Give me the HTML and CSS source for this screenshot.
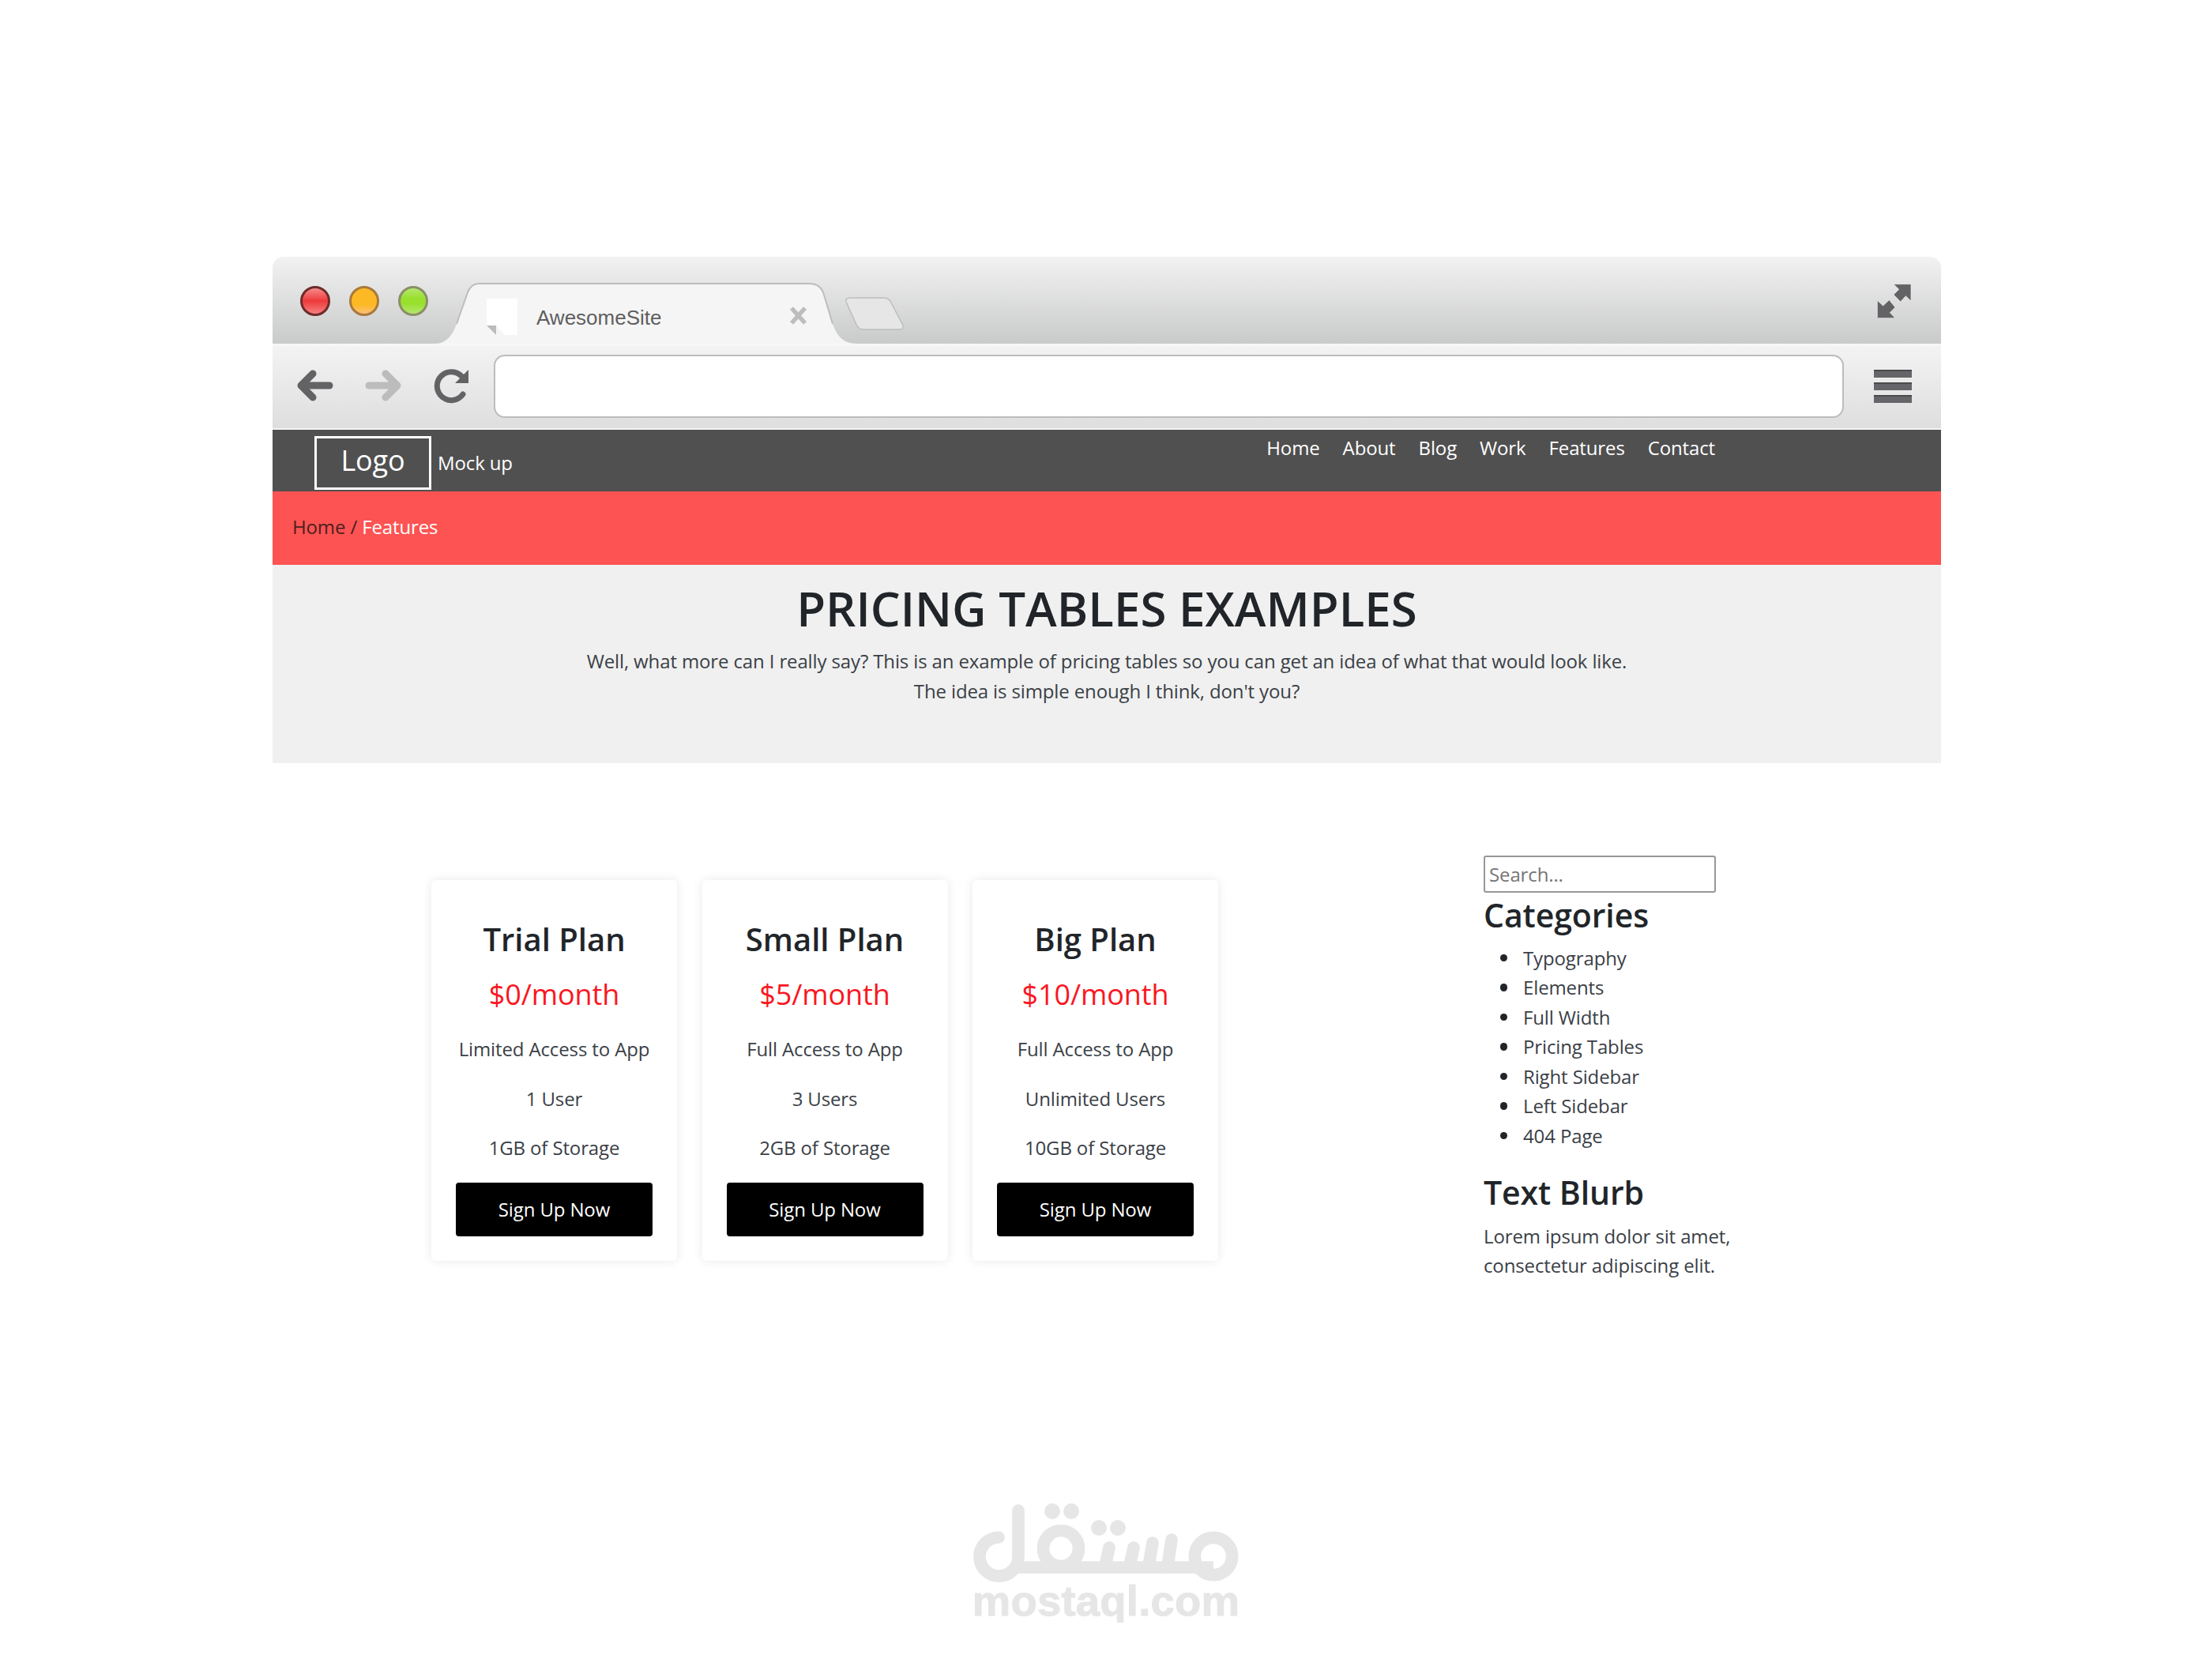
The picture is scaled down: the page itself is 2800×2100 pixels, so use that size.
FILE: index.html
```html
<!DOCTYPE html>
<html lang="en">

<head>
  <meta charset="utf-8">
  <title>AwesomeSite - Pricing Tables</title>
  <link rel="stylesheet" href="styles.css">
</head>

<body>
  <div class="frame">
    <div class="tab-strip">
      <div class="lights">
        <span class="light light-red"></span>
        <span class="light light-amber"></span>
        <span class="light light-green"></span>
      </div>
      <div class="tab">
        <svg class="tab-shape" viewBox="0 0 534 77">
          <path fill="#f5f5f5" d="M0 77C14 77 22 66 27 52L41 12C44 5 48 1 55 0H474C482 1 488 5 491 12L503 52C508 66 515 77 534 77Z"/>
          <path fill="none" stroke="#bdbdbd" stroke-width="2" d="M27 52L41 12C44 5 48 1 55 1H474C482 1 488 5 491 12L503 52"/>
        </svg>
        <svg class="favicon" viewBox="0 0 39 46">
          <polygon fill="#fff" points="0,34 0,0 39,0 39,46 23,46 12,34"/>
          <polygon fill="#bcbcbc" points="0,34 12,34 12,46"/>
        </svg>
        <span class="tab-title">AwesomeSite</span>
        <svg class="tab-close" viewBox="0 0 23 23">
          <path stroke="#bdbdbd" stroke-width="5.5" d="M3 2L20 21M20 2L3 21"/>
        </svg>
      </div>
      <svg class="new-tab" viewBox="0 0 76 42">
        <path fill="#e6e6e6" stroke="#bdbdbd" stroke-width="1.5" d="M7 1H50C54 1 57 3 59 7L74 36C75 39 73 41 70 41H24C20 41 17 39 15 35L2 6C1 3 3 1 7 1Z"/>
      </svg>
      <svg class="expand" viewBox="160 80 150 150">
        <polygon fill="#636265" stroke="#f2f2f2" stroke-width="2" points="232,88 298,88 298,152 278,133 258,155 232,128 252,108"/>
        <polygon fill="#636265" stroke="#f2f2f2" stroke-width="2" points="170,150 192,170 215,148 238,176 218,196 238,217 170,217"/>
      </svg>
    </div>

    <div class="toolbar">
      <svg class="tool-arrow" viewBox="0 0 48 48">
        <path fill="none" stroke="#636265" stroke-width="9" stroke-linecap="round" stroke-linejoin="round" d="M21 8L6 23L21 38"/>
        <path fill="none" stroke="#636265" stroke-width="9" stroke-linecap="round" d="M8 23H42"/>
      </svg>
      <svg class="tool-arrow tool-forward" viewBox="0 0 48 48">
        <path fill="none" stroke="#bcbcbc" stroke-width="9" stroke-linecap="round" stroke-linejoin="round" d="M27 8L42 23L27 38"/>
        <path fill="none" stroke="#bcbcbc" stroke-width="9" stroke-linecap="round" d="M40 23H6"/>
      </svg>
      <svg class="tool-reload" viewBox="0 0 52 48">
        <path fill="none" stroke="#636265" stroke-width="7" stroke-linecap="round" d="M41 34A18 18 0 1 1 40 12"/>
        <polygon fill="#636265" points="48,3 48,20 31,20"/>
      </svg>
      <div class="address"></div>
      <div class="menu-btn">
        <span></span>
        <span></span>
        <span></span>
      </div>
    </div>

    <nav class="site-nav">
      <a class="logo" href="#">Logo</a>
      <span class="mock">Mock up</span>
      <ul class="nav-links">
        <li><a href="#">Home</a></li>
        <li><a href="#">About</a></li>
        <li><a href="#">Blog</a></li>
        <li><a href="#">Work</a></li>
        <li><a href="#">Features</a></li>
        <li><a href="#">Contact</a></li>
      </ul>
    </nav>

    <div class="crumbs"><a href="#">Home</a> / <span class="crumb-current">Features</span></div>

    <header class="hero">
      <h1>PRICING TABLES EXAMPLES</h1>
      <p>Well, what more can I really say? This is an example of pricing tables so you can get an idea of what that would look like.<br>The idea is simple enough I think, don't you?</p>
    </header>

    <div class="content">
      <section class="plans">
        <div class="plan">
          <h3>Trial Plan</h3>
          <div class="price">$0/month</div>
          <ul>
            <li>Limited Access to App</li>
            <li>1 User</li>
            <li>1GB of Storage</li>
          </ul>
          <a class="signup" href="#">Sign Up Now</a>
        </div>
        <div class="plan">
          <h3>Small Plan</h3>
          <div class="price">$5/month</div>
          <ul>
            <li>Full Access to App</li>
            <li>3 Users</li>
            <li>2GB of Storage</li>
          </ul>
          <a class="signup" href="#">Sign Up Now</a>
        </div>
        <div class="plan">
          <h3>Big Plan</h3>
          <div class="price">$10/month</div>
          <ul>
            <li>Full Access to App</li>
            <li>Unlimited Users</li>
            <li>10GB of Storage</li>
          </ul>
          <a class="signup" href="#">Sign Up Now</a>
        </div>
      </section>

      <aside class="sidebar">
        <input class="search" type="text" placeholder="Search...">
        <h3>Categories</h3>
        <ul>
          <li>Typography</li>
          <li>Elements</li>
          <li>Full Width</li>
          <li>Pricing Tables</li>
          <li>Right Sidebar</li>
          <li>Left Sidebar</li>
          <li>404 Page</li>
        </ul>
        <h3 class="blurb-title">Text Blurb</h3>
        <p>Lorem ipsum dolor sit amet,<br>consectetur adipiscing elit.</p>
      </aside>
    </div>
  </div>

  <div class="watermark">
    <svg class="watermark-logo" viewBox="0 0 440 144">
      <g fill="none" stroke="#e6e6e6" stroke-width="15.7" stroke-linecap="round">
        <path d="M84 86A24.5 24.5 0 1 0 109 110V52"/>
        <circle cx="163" cy="100" r="22.5"/>
        <circle cx="356" cy="110" r="23.7"/>
        <path stroke-linecap="butt" d="M109 124H356"/>
        <path d="M224 99L219 122"/>
        <path d="M255 99L250 122"/>
        <path d="M279 93L274 122"/>
        <path d="M303 89L298 122"/>
      </g>
      <g fill="#e6e6e6">
        <circle cx="152" cy="53" r="10"/>
        <circle cx="176" cy="53" r="10"/>
        <circle cx="211" cy="74" r="10"/>
        <circle cx="235" cy="74" r="10"/>
      </g>
    </svg>
    <div class="watermark-text">mostaql.com</div>
  </div>
</body>

</html>
```

FILE: styles.css
```css
body {
  margin: 0;
  background-color: #fff;
  color: #3a4046;
  font-family: "Open Sans", "Noto Sans", sans-serif;
  font-size: 24px;
  line-height: 37.5px;
  letter-spacing: -0.13px;
}
a {
  color: inherit;
  text-decoration: none;
}
ul {
  margin: 0;
  padding: 0;
}
.frame {
  width: 2112px;
  margin: 325px 0 0 345px;
}

/* browser chrome */
.tab-strip {
  display: flex;
  height: 110px;
  border-radius: 14px 14px 0 0;
  background: linear-gradient(#f2f2f2, #c9caca);
}
.lights {
  display: flex;
  gap: 24px;
  margin: 37px 0 0 35px;
}
.light {
  box-sizing: border-box;
  width: 38px;
  height: 38px;
  border-radius: 50%;
  border: 3px solid;
}
.light-red {
  border-color: #6f2b2b;
  background: linear-gradient(#f68a8a, #ee3a3a 50%, #f77f7f);
}
.light-amber {
  border-color: #a9793c;
  background: linear-gradient(#fdb924 65%, #fcc07a);
}
.light-green {
  border-color: #8b8f68;
  background: linear-gradient(#b4e76f, #98e02d 40%, #98e02d 60%, #b4e76f);
}
.tab {
  position: relative;
  display: flex;
  align-items: center;
  box-sizing: border-box;
  width: 534px;
  height: 77px;
  margin: 33px 0 0 9px;
  padding: 9px 63px 0 65px;
  color: #5f5f5f;
  font-family: "Liberation Sans", sans-serif;
  font-size: 26px;
  letter-spacing: 0;
}
.tab-shape {
  position: absolute;
  top: 0;
  left: 0;
  width: 534px;
  height: 77px;
}
.favicon {
  position: relative;
  width: 39px;
  height: 46px;
}
.tab-title {
  position: relative;
  margin: 3px 0 0 24px;
}
.tab-close {
  position: relative;
  width: 23px;
  height: 23px;
  margin: -4px 0 0 auto;
}
.new-tab {
  width: 78px;
  height: 42px;
  margin: 51px 0 0 -17px;
}
.expand {
  width: 50px;
  height: 50px;
  margin: 32px 34px 0 auto;
}
.toolbar {
  display: flex;
  align-items: center;
  box-sizing: border-box;
  height: 109px;
  padding: 0 37px 2px 30px;
  border-top: 3px solid #f7f7f7;
  border-bottom: 2px solid #f5f5f5;
  background: linear-gradient(#f3f3f3, #dedede);
}
.tool-arrow {
  width: 48px;
  height: 48px;
}
.tool-forward {
  margin-left: 38px;
}
.tool-reload {
  width: 52px;
  height: 48px;
  margin-left: 36px;
}
.address {
  flex: 1;
  box-sizing: border-box;
  height: 80px;
  margin: 0 38px 0 28px;
  border: 2px solid #bcbcbc;
  border-radius: 14px;
  background-color: #fff;
}
.menu-btn {
  display: flex;
  flex-direction: column;
  gap: 5.5px;
}
.menu-btn span {
  box-sizing: border-box;
  width: 48px;
  height: 10.5px;
  border-top: 2px solid #4b4b4b;
  background-color: #666569;
}

/* site header */
.site-nav {
  display: flex;
  align-items: flex-start;
  height: 78px;
  background-color: #505050;
  color: #fff;
}
.logo {
  box-sizing: border-box;
  width: 148px;
  height: 68px;
  margin: 8px 0 0 53px;
  border: 3px solid #fff;
  font-size: 36px;
  line-height: 55px;
  text-align: center;
}
.mock {
  margin: 23px 0 0 8px;
}
.nav-links {
  display: flex;
  gap: 29px;
  margin: 4px 286px 0 auto;
  list-style: none;
}
.crumbs {
  box-sizing: border-box;
  height: 93px;
  padding: 26px 0 0 25px;
  background-color: #fd5353;
  color: #4a2020;
}
.crumb-current {
  color: #fff;
}
.hero {
  box-sizing: border-box;
  height: 251px;
  padding-top: 18px;
  background-color: #f0f0f0;
  text-align: center;
}
.hero h1 {
  margin: 0 0 11px;
  color: #212529;
  font-size: 60px;
  font-weight: 600;
  line-height: 74px;
  letter-spacing: 0;
}
.hero p {
  margin: 0;
}

/* pricing + sidebar */
.content {
  display: flex;
  align-items: flex-start;
  padding: 117px 0 0 201px;
}
.plans {
  display: flex;
  gap: 31.5px;
  margin-top: 31px;
}
.plan {
  box-sizing: border-box;
  width: 311px;
  height: 482px;
  padding: 31px;
  border-radius: 6px;
  box-shadow: 0 0 14px rgba(0, 0, 0, 0.09);
  text-align: center;
}
.plan h3 {
  margin: 14px 0 0;
  color: #212529;
  font-size: 40px;
  font-weight: 600;
  line-height: 60px;
  letter-spacing: 0;
}
.price {
  margin-top: 10px;
  color: #f9171f;
  font-size: 36px;
  line-height: 60px;
}
.plan ul {
  margin-top: 7.5px;
  list-style: none;
}
.plan li {
  padding: 12.5px 0;
}
.signup {
  display: block;
  height: 68px;
  margin-top: 12.5px;
  border-radius: 4px;
  background-color: #000;
  color: #fff;
  line-height: 68px;
}
.sidebar {
  width: 340px;
  margin-left: 336px;
}
.search {
  display: block;
  box-sizing: border-box;
  width: 294px;
  height: 47px;
  padding: 0 5px;
  border: 2px solid #979797;
  border-radius: 3px;
  font: inherit;
  letter-spacing: inherit;
}
.sidebar h3 {
  margin: 0;
  color: #212529;
  font-size: 41px;
  font-weight: 600;
  line-height: 56px;
  letter-spacing: -0.1px;
}
.sidebar ul {
  margin-top: 7.5px;
  padding-left: 50px;
  list-style: none;
}
.sidebar li {
  display: flex;
  align-items: center;
}
.sidebar li::before {
  content: "";
  width: 9.5px;
  height: 9.5px;
  margin: 0 20px 0 -29.5px;
  border-radius: 50%;
  background-color: #212529;
}
.sidebar .blurb-title {
  margin-top: 24.5px;
}
.sidebar p {
  margin: 9px 0 0;
}

/* watermark */
.watermark {
  width: 440px;
  margin: 239px auto 0;
  text-align: center;
}
.watermark-logo {
  display: block;
  width: 440px;
  height: 144px;
}
.watermark-text {
  margin-top: -4px;
  color: #e6e6e6;
  font-family: "Liberation Sans", sans-serif;
  font-size: 54.5px;
  font-weight: 700;
  line-height: 54px;
  letter-spacing: 0.2px;
  -webkit-text-stroke: 1px #e6e6e6;
}
```
